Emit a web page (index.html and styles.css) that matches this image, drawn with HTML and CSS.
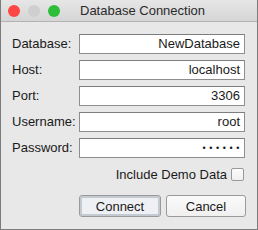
FILE: index.html
```html
<!DOCTYPE html>
<html>
<head>
<meta charset="utf-8">
<link rel="stylesheet" href="styles.css">
</head>
<body>
<div class="window">
  <div class="titlebar">
    <div class="lights">
      <span class="light red"></span>
      <span class="light gray"></span>
      <span class="light green"></span>
    </div>
    <div class="title">Database Connection</div>
  </div>
  <div class="content">
    <div class="form">
      <label class="label">Database:</label>
      <div class="field">NewDatabase</div>
      <label class="label">Host:</label>
      <div class="field">localhost</div>
      <label class="label">Port:</label>
      <div class="field">3306</div>
      <label class="label">Username:</label>
      <div class="field">root</div>
      <label class="label">Password:</label>
      <div class="field pass">••••••</div>
    </div>
    <div class="check-row">
      <span class="check-label">Include Demo Data</span>
      <span class="checkbox"></span>
    </div>
    <div class="buttons">
      <button class="btn default">Connect</button>
      <button class="btn">Cancel</button>
    </div>
  </div>
</div>
</body>
</html>
```
FILE: styles.css
```css
html, body {
  margin: 0;
  padding: 0;
}
body {
  font-family: "Liberation Sans", Arial, sans-serif;
  font-size: 13px;
  color: #1a1a1a;
  background: #e8e8e8;
}
.window {
  width: 258px;
  height: 230px;
  box-sizing: border-box;
  border: 1px solid #7c7c7c;
  border-top: none;
  background: #e8e8e8;
  display: flex;
  flex-direction: column;
}
.titlebar {
  height: 21px;
  flex: none;
  display: flex;
  align-items: center;
  background: linear-gradient(#e6e6e6, #d5d5d5);
  border-bottom: 1px solid #b3b3b3;
  box-sizing: content-box;
}
.lights {
  display: flex;
  gap: 8px;
  padding-left: 7px;
  width: 72px;
  flex: none;
}
.light {
  width: 12px;
  height: 12px;
  border-radius: 50%;
  display: block;
}
.light.red { background: #fc4745; }
.light.gray { background: #cfcfcf; }
.light.green { background: #2dbe39; }
.title {
  color: #2a2a2a;
  font-size: 13px;
  padding-left: 0px;
}
.content {
  padding: 12px 12px 0 11px;
  display: flex;
  flex-direction: column;
}
.form {
  display: grid;
  grid-template-columns: 67px 166px;
  row-gap: 6px;
  align-items: center;
}
.label {
  line-height: 20px;
}
.field {
  height: 20px;
  box-sizing: border-box;
  border: 1px solid #8e8e8e;
  border-top-color: #7d7d7d;
  background: #ffffff;
  text-align: right;
  padding-right: 4px;
  line-height: 18px;
  color: #1a1a1a;
}
.field.pass {
  font-size: 9px;
  letter-spacing: 3.6px;
  padding-right: 1px;
}
.check-row {
  margin-top: 10px;
  display: flex;
  justify-content: flex-end;
  align-items: center;
  gap: 4px;
  padding-right: 1px;
  height: 13px;
}
.check-label {
  line-height: 13px;
}
.checkbox {
  width: 13px;
  height: 13px;
  box-sizing: border-box;
  border: 1px solid #999999;
  border-radius: 2px;
  background: linear-gradient(#fbfbfb, #f0f0f0);
  display: block;
}
.buttons {
  margin-top: 14px;
  display: flex;
  justify-content: flex-end;
  gap: 5px;
  margin-right: -1px;
}
.btn {
  font-family: "Liberation Sans", Arial, sans-serif;
  font-size: 13px;
  color: #1a1a1a;
  height: 22px;
  width: 80px;
  box-sizing: border-box;
  border: 1px solid #9a9a9a;
  border-radius: 3px;
  background: linear-gradient(#fafafa, #f0f0f0);
  padding: 0;
  margin: 0;
}
.btn.default {
  width: 82px;
  box-shadow: inset 0 0 0 2px #c4cad2;
  background: #eef0f3;
}
```
